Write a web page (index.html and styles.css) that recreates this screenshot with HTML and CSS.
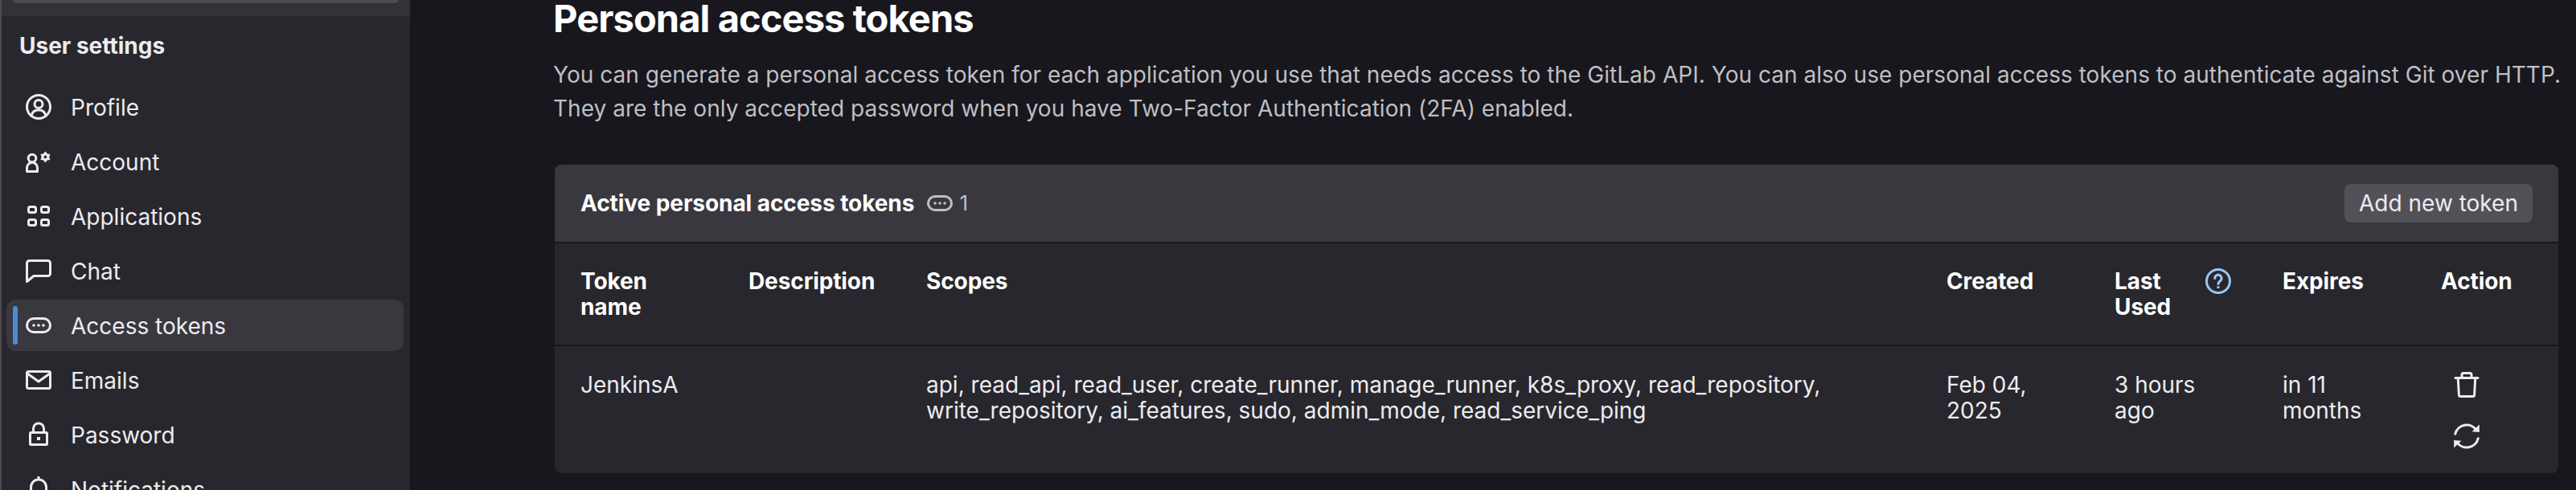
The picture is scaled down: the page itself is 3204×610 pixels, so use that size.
FILE: index.html
```html
<!DOCTYPE html>
<html lang="en">
<head>
<meta charset="utf-8">
<title>Personal access tokens</title>
<link rel="stylesheet" href="styles.css">
</head>
<body>
<div class="app">
  <aside class="sidebar">
    <div class="search-band"><div class="search-box"></div></div>
    <div class="sidebar-title">User settings</div>
    <nav class="nav">
      <a class="nav-item"><svg class="icon" viewBox="0 0 16 16"><circle cx="8" cy="8" r="7.25"/><circle cx="8" cy="6.25" r="2.5"/><path d="M3.6 13.6c.4-2.4 2.2-3.6 4.4-3.6s4 1.2 4.4 3.6"/></svg><span class="nav-label">Profile</span></a>
      <a class="nav-item"><svg class="icon" viewBox="0 0 16 16"><circle cx="4" cy="6" r="2.4"/><path d="M.75 14.25V12a3.25 3.4 0 0 1 6.5 0v2.25z"/><path class="solid" fill-rule="evenodd" d="M12.2 1.7L13.4 3.12 15.23 3.45 14.6 5.2 15.23 6.95 13.4 7.28 12.2 8.7 11 7.28 9.17 6.95 9.8 5.2 9.17 3.45 11 3.12ZM12.2 4.3a.9.9 0 1 0 0 1.8.9.9 0 0 0 0-1.8z"/></svg><span class="nav-label">Account</span></a>
      <a class="nav-item"><svg class="icon" viewBox="0 0 16 16"><rect x="1.75" y="2.25" width="4.5" height="3.5" rx="1"/><rect x="9.75" y="2.25" width="4.5" height="3.5" rx="1"/><rect x="1.75" y="10.25" width="4.5" height="3.5" rx="1"/><rect x="9.75" y="10.25" width="4.5" height="3.5" rx="1"/></svg><span class="nav-label">Applications</span></a>
      <a class="nav-item"><svg class="icon" viewBox="0 0 16 16"><path d="M2.25 1.75h11.5a1.5 1.5 0 0 1 1.5 1.5v6.5a1.5 1.5 0 0 1-1.5 1.5H5L.75 14.75V3.25a1.5 1.5 0 0 1 1.5-1.5z"/></svg><span class="nav-label">Chat</span></a>
      <a class="nav-item is-active"><svg class="icon" viewBox="0 0 16 16"><rect x=".75" y="3.75" width="14.5" height="8.5" rx="4.25"/><circle class="solid" cx="5" cy="8" r=".9"/><circle class="solid" cx="8" cy="8" r=".9"/><circle class="solid" cx="11" cy="8" r=".9"/></svg><span class="nav-label">Access tokens</span></a>
      <a class="nav-item"><svg class="icon" viewBox="0 0 16 16"><rect x=".75" y="2.75" width="14.5" height="10.5" rx="1"/><path d="M1 4l7 5 7-5"/></svg><span class="nav-label">Emails</span></a>
      <a class="nav-item"><svg class="icon" viewBox="0 0 16 16"><rect x="2.75" y="6.75" width="10.5" height="7.5" rx=".5"/><path d="M4.75 6.5V4.25a3.25 3.25 0 0 1 6.5 0V6.5"/><rect class="solid" x="7" y="9.5" width="2" height="2"/></svg><span class="nav-label">Password</span></a>
      <a class="nav-item"><svg class="icon" viewBox="0 0 16 16"><path d="M8 .5v1.5M3.25 12.5V6.75a4.75 4.75 0 0 1 9.5 0v5.75M1.5 12.5h13M6 15h4"/></svg><span class="nav-label">Notifications</span></a>
    </nav>
  </aside>
  <main class="main">
    <h1 class="page-title">Personal access tokens</h1>
    <p class="intro">You can generate a personal access token for each application you use that needs access to the GitLab API. You can also use personal access tokens to authenticate against Git over HTTP. They are the only accepted password when you have Two-Factor Authentication (2FA) enabled.</p>
    <section class="card">
      <header class="card-header">
        <h2 class="card-title">Active personal access tokens</h2>
        <span class="count"><svg class="icon" viewBox="0 0 16 16"><rect x=".75" y="3.75" width="14.5" height="8.5" rx="4.25"/><circle class="solid" cx="5" cy="8" r=".9"/><circle class="solid" cx="8" cy="8" r=".9"/><circle class="solid" cx="11" cy="8" r=".9"/></svg>1</span>
        <button class="btn" type="button">Add new token</button>
      </header>
      <table class="tokens">
        <colgroup>
          <col class="c-name"><col class="c-desc"><col class="c-scopes"><col class="c-created"><col class="c-used"><col class="c-expires"><col class="c-action">
        </colgroup>
        <thead>
          <tr>
            <th>Token name</th>
            <th>Description</th>
            <th>Scopes</th>
            <th>Created</th>
            <th><div class="th-help"><span class="th-label">Last Used</span><svg class="icon help" viewBox="0 0 16 16"><circle cx="8" cy="8" r="7.25"/><path d="M5.9 6.2a2.1 2.1 0 1 1 3.3 1.7c-.7.5-1.2.9-1.2 1.8"/><circle class="solid" cx="8" cy="11.8" r=".85"/></svg></div></th>
            <th>Expires</th>
            <th>Action</th>
          </tr>
        </thead>
        <tbody>
          <tr>
            <td>JenkinsA</td>
            <td></td>
            <td>api, read_api, read_user, create_runner, manage_runner, k8s_proxy, read_repository, write_repository, ai_features, sudo, admin_mode, read_service_ping</td>
            <td>Feb 04, 2025</td>
            <td>3 hours ago</td>
            <td>in 11 months</td>
            <td class="actions">
              <button class="icon-btn" type="button" aria-label="Revoke"><svg class="icon" viewBox="0 0 16 16"><path d="M1 3.75h14M5 3.5V1.75a1 1 0 0 1 1-1h4a1 1 0 0 1 1 1V3.5M2.6 3.75l.6 10.5a1 1 0 0 0 1 1h7.6a1 1 0 0 0 1-1l.6-10.5"/></svg></button>
              <button class="icon-btn" type="button" aria-label="Rotate"><svg class="icon" viewBox="0 0 16 16"><path d="M.9 6.6A7.25 7.25 0 0 1 14 4.2"/><path class="solid" d="M15.9 .7v4.8l-4.6-.4z"/><path d="M15.1 9.4A7.25 7.25 0 0 1 2 11.8"/><path class="solid" d="M.1 15.3v-4.8l4.6.4z"/></svg></button>
            </td>
          </tr>
        </tbody>
      </table>
    </section>
  </main>
</div>
</body>
</html>
```

FILE: styles.css
```css
* { box-sizing: border-box; }
html, body { margin: 0; height: 100%; }
body {
  background: #18171d;
  color: #ececef;
  font-family: Inter, "Noto Sans", sans-serif;
  font-size: 28px;
  line-height: 32px;
  overflow: hidden;
}
.app { display: flex; height: 100vh; overflow: hidden; }
.icon {
  width: 32px;
  height: 32px;
  flex: none;
  fill: none;
  stroke: currentColor;
  stroke-width: 1.5;
  stroke-linecap: round;
  stroke-linejoin: round;
  display: block;
}
.icon .solid { fill: currentColor; stroke: none; }

.sidebar {
  width: 510px;
  flex: none;
  background: #28272d;
  border-left: 2px solid #4c4b51;
}
.search-band { height: 20px; background: #333238; padding: 0 15px; }
.search-box { height: 4px; background: #4c4b51; border-radius: 0 0 8px 8px; }
.sidebar-title { font-weight: 700; padding: 21px 0 0 22px; color: #ececef; }
.nav { display: flex; flex-direction: column; gap: 4px; padding: 28px 8px 0 6px; }
.nav-item {
  position: relative;
  display: flex;
  align-items: center;
  gap: 24px;
  height: 64px;
  padding-left: 24px;
  border-radius: 12px;
  color: #ececef;
}
.nav-label { padding-top: 2px; }
.nav-item.is-active { background: #3a383f; }
.nav-item.is-active::before {
  content: "";
  position: absolute;
  left: 8px;
  top: 8px;
  width: 6px;
  height: 48px;
  border-radius: 3px;
  background: #4b8bd6;
}

.main { flex: 1; min-width: 0; padding: 0 12px 0 178px; }
.page-title {
  margin: 0;
  font-size: 47px;
  line-height: 46px;
  font-weight: 700;
  color: #fff;
  letter-spacing: -0.9px;
}
.intro { margin: 26px 0 49px; line-height: 42px; color: #bfbfc3; letter-spacing: 0.03px; }

.card { margin: 0 10px 0 2px; background: #28272d; border-radius: 8px; overflow: hidden; }
.card-header {
  display: flex;
  align-items: center;
  height: 98px;
  padding: 0 32px;
  background: #3a383f;
  border-bottom: 2px solid #18171d;
}
.card-title { margin: 0; font-size: 28px; line-height: 32px; font-weight: 700; color: #fff; letter-spacing: -0.06px; }
.count { display: flex; align-items: center; gap: 8px; margin-left: 16px; color: #bfbfc3; font-size: 26px; }
.btn {
  margin-left: auto;
  height: 48px;
  width: 234px;
  padding: 0;
  border: 0;
  border-radius: 8px;
  background: #535158;
  color: #ececef;
  font: inherit;
}

.tokens { width: 100%; border-collapse: collapse; table-layout: fixed; }
.c-name { width: 209px; }
.c-desc { width: 221px; }
.c-created { width: 209px; }
.c-used { width: 209px; }
.c-expires { width: 197px; }
.c-action { width: 178px; }
.tokens th, .tokens td { text-align: left; vertical-align: top; padding: 0 32px; }
.tokens th { font-weight: 700; color: #fff; padding-top: 31px; padding-bottom: 31px; border-bottom: 2px solid #18171d; letter-spacing: -0.1px; }
.tokens td { padding-top: 32px; height: 158px; }
.tokens td.actions { padding: 16px 0 14px 32px; }
.th-help { display: flex; justify-content: space-between; align-items: flex-start; }
.th-label { width: 80px; }
.help { color: #9dc7f1; }
.icon-btn {
  display: flex;
  align-items: center;
  justify-content: center;
  width: 64px;
  height: 64px;
  padding: 0;
  border: 0;
  background: transparent;
  color: #ececef;
}
```
